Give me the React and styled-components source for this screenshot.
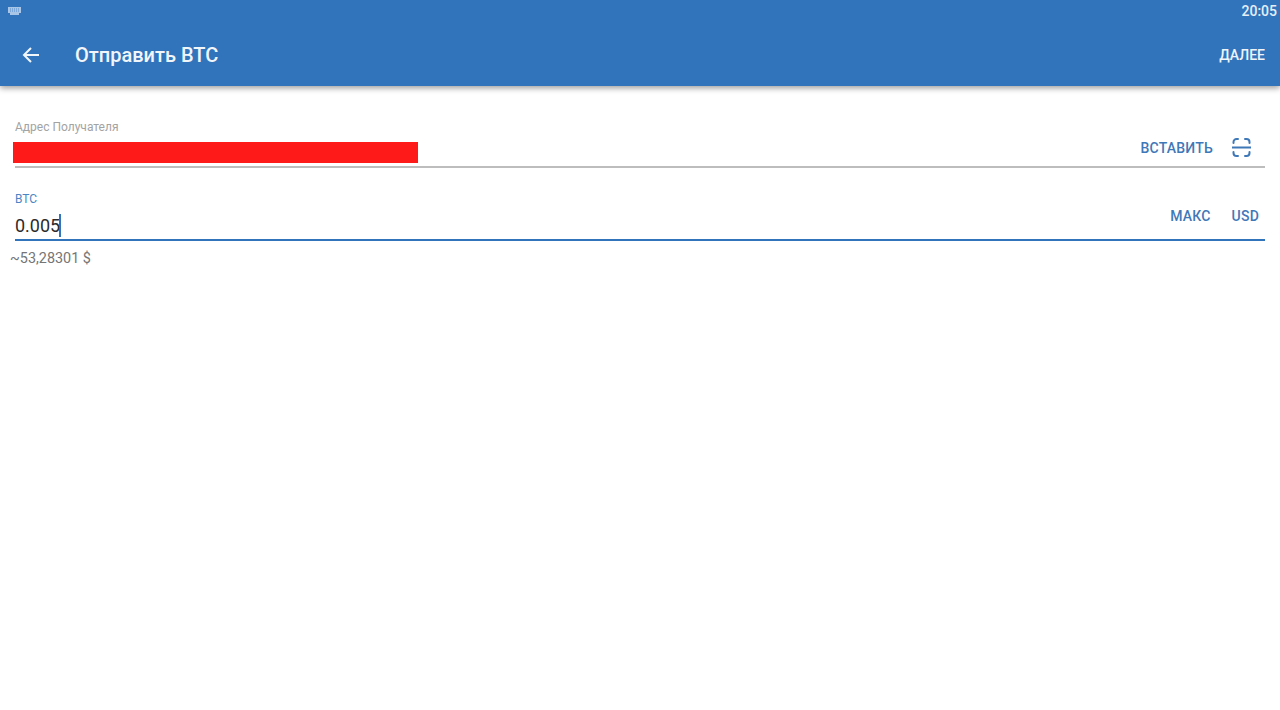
import React from 'react'
import styled, { createGlobalStyle } from 'styled-components'

const GlobalStyle = createGlobalStyle`
  html, body {
    margin: 0;
    padding: 0;
    background: #fff;
    font-family: Roboto, "Liberation Sans", sans-serif;
  }
`

const Page = styled.div`
  width: 1280px;
  height: 710px;
  overflow: hidden;
  background: #fff;
`

const Header = styled.header`
  height: 86px;
  background: #3174bc;
  box-shadow: 0 2px 6px rgba(0, 0, 0, 0.4);
  color: #fff;
`

const StatusBar = styled.div`
  height: 22px;
  display: flex;
  align-items: center;
  justify-content: space-between;
  padding: 0 3px 0 7px;
`

const Clock = styled.div`
  font-size: 14px;
  font-weight: 500;
  color: #e6eef7;
`

const Toolbar = styled.div`
  height: 64px;
  box-sizing: border-box;
  display: flex;
  align-items: center;
  padding: 2px 15px 0 22px;
`

const BackButton = styled.div`
  width: 53px;
  height: 18px;
  display: flex;
  align-items: center;
`

const Title = styled.h1`
  flex: 1;
  margin: 0;
  font-size: 20px;
  font-weight: 500;
  color: #f1f6fb;
`

const NextButton = styled.div`
  font-size: 14px;
  font-weight: 500;
  color: #eef4fa;
`

const Form = styled.main`
  padding: 34px 15px 0 15px;
`

const Field = styled.div`
  height: ${({ $height }) => $height}px;
  border-bottom: 2px solid ${({ $active }) => ($active ? '#3174bc' : '#bdbdbd')};
  display: flex;
  align-items: flex-end;
  justify-content: space-between;
  box-sizing: border-box;
  & + & {
    margin-top: 23px;
  }
`

const FieldBody = styled.div`
  display: flex;
  flex-direction: column;
`

const Label = styled.div`
  font-size: 12px;
  line-height: 14px;
  color: ${({ $active }) => ($active ? '#4a86c5' : '#a3a3a3')};
`

const Redacted = styled.div`
  width: 405px;
  height: 21px;
  margin: 8px 0 3px -2px;
  background: #ff1a1a;
`

const ValueRow = styled.div`
  display: flex;
  align-items: center;
  height: 26px;
  margin-top: 6px;
  margin-bottom: 1px;
  font-size: 18px;
  color: #2b2b2b;
`

const Caret = styled.span`
  width: 2px;
  height: 23px;
  margin-left: -1px;
  background: #3174bc;
`

const Actions = styled.div`
  display: flex;
  align-items: center;
  gap: ${({ $gap }) => $gap}px;
  margin-bottom: ${({ $bottom }) => $bottom}px;
  margin-right: ${({ $right }) => $right}px;
`

const Action = styled.span`
  font-size: 14px;
  font-weight: 500;
  letter-spacing: 0.2px;
  color: #3f78b8;
`

const Hint = styled.div`
  margin: 9px 0 0 -5px;
  font-size: 14.4px;
  line-height: 18px;
  color: #757575;
`

const KeyboardIcon = () => (
  <svg width="15" height="10" viewBox="0 0 15 10">
    <path d="M1 1h13v6h-2v2H3V7H1z" fill="#a9c6e6" />
    <path d="M3 3h9M3 5h9" stroke="#3174bc" strokeWidth="0.7" strokeDasharray="1 1" />
  </svg>
)

const BackIcon = () => (
  <svg width="18" height="18" viewBox="0 0 18 18" fill="none" stroke="#f1f6fb" strokeWidth="2">
    <path d="M17 9H2M9 2L2 9l7 7" />
  </svg>
)

const ScanIcon = () => (
  <svg width="19" height="19" viewBox="0 0 19 19" fill="none" stroke="#3f78b8" strokeWidth="2" strokeLinecap="round">
    <path d="M1.5 5V4a3 3 0 0 1 3-3H6M13 1h1.5a3 3 0 0 1 3 3v1" />
    <path d="M0.5 9.5h18" />
    <path d="M1.5 14v1a3 3 0 0 0 3 3H6M13 18h1.5a3 3 0 0 0 3-3v-1" />
  </svg>
)

export default function App() {
  return (
    <Page>
      <GlobalStyle />
      <Header>
        <StatusBar>
          <KeyboardIcon />
          <Clock>20:05</Clock>
        </StatusBar>
        <Toolbar>
          <BackButton><BackIcon /></BackButton>
          <Title>Отправить BTC</Title>
          <NextButton>ДАЛЕЕ</NextButton>
        </Toolbar>
      </Header>
      <Form>
        <Field $height={48}>
          <FieldBody>
            <Label>Адрес Получателя</Label>
            <Redacted />
          </FieldBody>
          <Actions $gap={19} $bottom={9} $right={14}>
            <Action>ВСТАВИТЬ</Action>
            <ScanIcon />
          </Actions>
        </Field>
        <Field $height={50} $active>
          <FieldBody>
            <Label $active>BTC</Label>
            <ValueRow>0.005<Caret /></ValueRow>
          </FieldBody>
          <Actions $gap={21} $bottom={15} $right={6}>
            <Action>МАКС</Action>
            <Action>USD</Action>
          </Actions>
        </Field>
        <Hint>~53,28301 $</Hint>
      </Form>
    </Page>
  )
}
